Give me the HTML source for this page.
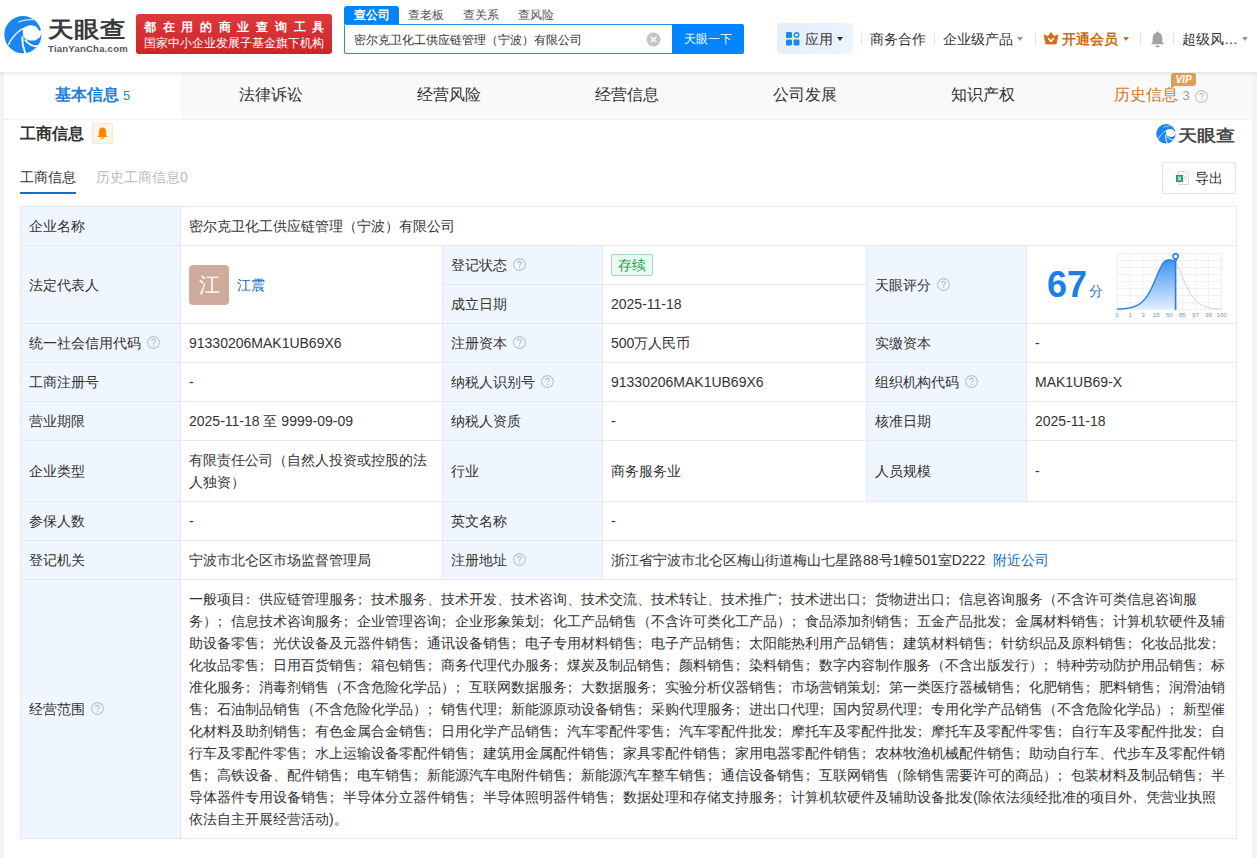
<!DOCTYPE html>
<html><head><meta charset="utf-8">
<style>
*{box-sizing:border-box;margin:0;padding:0}
html,body{width:1257px;height:858px;overflow:hidden}
body{position:relative;background:#f3f3f3;font-family:"Liberation Sans",sans-serif;color:#333;font-size:14px}
.abs{position:absolute}
#hdr{position:absolute;left:0;top:0;width:1257px;height:72px;background:#fff}
.logo-t{position:absolute;left:48px;top:18px;font-size:26px;font-weight:bold;color:#3a3a3a;line-height:26px;transform:scaleY(.86);transform-origin:0 0}
.logo-s{position:absolute;left:48px;top:44px;font-size:9.5px;font-weight:bold;color:#555;letter-spacing:.25px;line-height:10px}
#badge{position:absolute;left:136px;top:14px;width:196px;height:40px;background:linear-gradient(#dd3a3c,#cc2629);border-radius:3px;color:#fff}
#badge .l1{position:absolute;left:8px;top:6px;font-size:12px;line-height:14px;font-weight:bold;letter-spacing:6.7px;white-space:nowrap}
#badge .l2{position:absolute;left:8px;top:22px;font-size:12px;line-height:14px;white-space:nowrap}
.stab{position:absolute;top:6px;height:18px;font-size:12px;line-height:18px;color:#555;white-space:nowrap}
.stab.on{background:#0084ff;color:#fff;border-radius:3px 3px 0 0;left:344px;width:55px;text-align:center;font-weight:bold}
#sinput{position:absolute;left:344px;top:24px;width:329px;height:30px;border:1px solid #2a8de0;border-right:none;border-radius:2px 0 0 2px;background:#fff}
#sinput span{position:absolute;left:9px;top:8px;font-size:12px;line-height:14px;color:#333;white-space:nowrap}
#sbtn{position:absolute;left:672px;top:24px;width:72px;height:30px;background:#0084ff;border-radius:0 2px 2px 0;color:#fff;font-size:12px;line-height:30px;text-align:center}
.nav{position:absolute;top:31px;font-size:14px;line-height:16px;color:#333;white-space:nowrap}
.sep{position:absolute;top:33px;width:1px;height:12px;background:#e3e3e3}
.caret{position:absolute;width:0;height:0;border-left:3.5px solid transparent;border-right:3.5px solid transparent;border-top:4px solid #999}
#tabs{position:absolute;left:4px;top:72px;width:1248px;height:48px;background:#f9f9f9;border-bottom:1px solid #f1f1f1}
.tab{position:absolute;top:0;width:178px;height:47px;text-align:center;font-size:16px;line-height:46px;color:#333}
.tab.on{background:#fff;color:#1e7fd8;font-weight:bold;width:177px;left:0}
#card{position:absolute;left:4px;top:120px;width:1248px;height:760px;background:#fff}
table{position:absolute;left:20px;top:206px;border-collapse:collapse;table-layout:fixed;width:1216px}
td{border:1px solid #e6e9ee;padding:8px 8px;font-size:14px;line-height:22px;color:#333;vertical-align:middle;white-space:nowrap}
td.k{background:#eff6fd}
.q{display:inline-block;position:relative;top:0px;width:13px;height:13px;vertical-align:-1px;margin-left:6px}
a{color:#0a6cc4;text-decoration:none}
.pp{font-style:normal;position:relative;left:-4px}
</style></head><body>
<div id="hdr">
  <svg class="abs" style="left:2px;top:14px" width="44" height="42" viewBox="0 0 44 42">
    <circle cx="20.9" cy="20.7" r="18.6" fill="#1a86f0"/>
    <path d="M21 14.7 C23 12.5 25 11.6 27.4 11.4 C30.5 11.2 33.5 12 35 13.5 C36.2 14.7 36.6 15.8 36.5 16.8 L41 16 L41 20.5 L39.6 19.6 C38.5 23.5 35.5 26.2 31.8 26.5 C28.5 26.8 26 26.3 24 25 C22 23.8 21.2 22.5 21 20.5 C20.8 18.5 20.8 16.5 21 14.7Z" fill="#fff"/>
    <path d="M6.2 31 C8.5 26 12 21.5 16 18 C18 16.2 20.5 14.8 22.8 14" fill="none" stroke="#fff" stroke-width="1.4"/>
    <path d="M16 8.4 C18.5 7 22 6.2 26 5.8 C27.6 5.7 29.5 5.6 31 5.7" fill="none" stroke="#fff" stroke-width="1"/>
    <path d="M20.4 22.5 C20.2 27 20.7 32 22.3 36 C22.7 37.2 23 38.2 23.5 39.5" fill="none" stroke="#fff" stroke-width="1.9"/>
    <path d="M22.8 25.5 C24.5 28 26.5 29.8 29 31 C31 32 33.5 32.4 36 32.3" fill="none" stroke="#fff" stroke-width="1.9"/>
    <path d="M31 4 C35 6 38 9 39.5 13 L44 13 L44 0Z" fill="#fff"/>
  </svg>
  <div class="logo-t">天眼查</div>
  <div class="logo-s">TianYanCha.com</div>
  <div id="badge"><div class="l1">都在用的商业查询工具</div><div class="l2">国家中小企业发展子基金旗下机构</div></div>
  <div class="stab on">查公司</div>
  <div class="stab" style="left:408px">查老板</div>
  <div class="stab" style="left:463px">查关系</div>
  <div class="stab" style="left:518px">查风险</div>
  <div id="sinput"><span>密尔克卫化工供应链管理（宁波）有限公司</span>
    <svg class="abs" style="left:301px;top:7px" width="15" height="15" viewBox="0 0 15 15"><circle cx="7.5" cy="7.5" r="7" fill="#c4c4c4"/><path d="M4.8 4.8L10.2 10.2M10.2 4.8L4.8 10.2" stroke="#fff" stroke-width="1.4"/></svg>
  </div>
  <div id="sbtn">天眼一下</div>
  <div class="abs" style="left:777px;top:23px;width:76px;height:31px;background:linear-gradient(135deg,#e3effc,#e9f2fd 70%,#eef5fd);border-radius:3px"></div>
  <svg class="abs" style="left:786px;top:32px" width="14" height="14" viewBox="0 0 14 14"><rect x="0" y="0" width="6" height="6" rx="1.2" fill="#1a86f0"/><rect x="0" y="7.5" width="6" height="6" rx="1.2" fill="#1a86f0"/><rect x="7.5" y="7.5" width="6" height="6" rx="1.2" fill="#1a86f0"/><circle cx="10.5" cy="3" r="2.3" fill="none" stroke="#1a86f0" stroke-width="1.4"/></svg>
  <div class="nav" style="left:805px">应用</div>
  <div class="caret" style="left:837px;top:37px;border-top-color:#333"></div>
  <div class="sep" style="left:861px"></div>
  <div class="nav" style="left:870px">商务合作</div>
  <div class="sep" style="left:934px"></div>
  <div class="nav" style="left:943px">企业级产品</div>
  <div class="caret" style="left:1017px;top:37px"></div>
  <div class="sep" style="left:1035px"></div>
  <svg class="abs" style="left:1043px;top:32px" width="16" height="13" viewBox="0 0 16 13"><path d="M1 2.8 L5 4.6 L8 0.4 L11 4.6 L15 2.8 L13.2 12 L2.8 12Z" fill="#cf6f1c" stroke="#cf6f1c" stroke-width=".8" stroke-linejoin="round"/><path d="M5.2 6.2 L8 9.4 L10.8 6.2" fill="none" stroke="#fff" stroke-width="1.6"/></svg>
  <div class="nav" style="left:1062px;color:#c8701e;font-weight:bold">开通会员</div>
  <div class="caret" style="left:1123px;top:37px;border-top-color:#c8701e"></div>
  <div class="sep" style="left:1140px"></div>
  <svg class="abs" style="left:1150px;top:31px" width="15" height="17" viewBox="0 0 15 17"><path d="M7.5 0.5 C8.3 0.5 8.6 1 8.6 1.6 C11 2.3 12.3 4.5 12.3 7.5 L12.3 11 L14 13.3 L1 13.3 L2.7 11 L2.7 7.5 C2.7 4.5 4 2.3 6.4 1.6 C6.4 1 6.7 0.5 7.5 0.5Z" fill="#a0a4a8"/><rect x="5.5" y="14.6" width="4" height="1.6" rx=".8" fill="#a0a4a8"/></svg>
  <div class="sep" style="left:1173px"></div>
  <div class="nav" style="left:1182px">超级风…</div>
  <div class="caret" style="left:1242px;top:37px"></div>
</div>
<div id="tabs">
  <div class="tab on">基本信息 <span style="font-size:13px;font-weight:normal">5</span></div>
  <div class="tab" style="left:178px">法律诉讼</div>
  <div class="tab" style="left:356px">经营风险</div>
  <div class="tab" style="left:534px">经营信息</div>
  <div class="tab" style="left:712px">公司发展</div>
  <div class="tab" style="left:890px">知识产权</div>
  <div class="tab" style="left:1068px;color:#c97a2e">历史信息 <span style="font-size:13px;color:#999">3</span><svg class="q" style="width:13px;height:13px;top:2px;margin-left:5px" viewBox="0 0 13 13"><circle cx="6.5" cy="6.5" r="5.9" fill="none" stroke="#c4c4c4" stroke-width="1.1"/><path d="M4.7 5.1 C4.7 3.9 5.5 3.3 6.5 3.3 C7.6 3.3 8.3 4 8.3 4.9 C8.3 6.2 6.6 6.2 6.6 7.8" fill="none" stroke="#bbb" stroke-width="1.05"/><circle cx="6.6" cy="9.5" r=".65" fill="#bbb"/></svg></div>
  <div class="abs" style="left:1167px;top:1px;width:25px;height:13px;background:#e0a050;border-radius:3px 3px 3px 0;color:#fff;font-size:10px;line-height:13px;font-weight:bold;font-style:italic;text-align:center">VIP</div>
  <div class="abs" style="left:1167px;top:14px;width:0;height:0;border-top:3px solid #e0a050;border-right:4px solid transparent"></div>
</div>
<div id="card"></div>
<div class="abs" style="left:0;top:72px;width:1257px;height:5px;background:linear-gradient(rgba(0,0,0,.085),rgba(0,0,0,.035) 40%,rgba(0,0,0,0))"></div>
<div class="abs" style="left:20px;top:124px;font-size:16px;line-height:20px;font-weight:bold;color:#333">工商信息</div>
<div class="abs" style="left:92px;top:123px;width:21px;height:21px;background:#fdf4ea;border:1px solid #f6e6d4;border-radius:2px"></div>
<svg class="abs" style="left:97px;top:127px" width="11" height="12" viewBox="0 0 11 12"><path d="M5.5 0.5 C8 0.5 9 2.5 9 5 L9 8 L10.5 10 L0.5 10 L2 8 L2 5 C2 2.5 3 0.5 5.5 0.5Z" fill="#ff8200"/><rect x="4" y="10.5" width="3" height="1.3" rx=".6" fill="#ff8200"/></svg>
<div class="abs" style="left:20px;top:169px;font-size:14px;line-height:16px;color:#333">工商信息</div>
<div class="abs" style="left:20px;top:192px;width:56px;height:2px;background:#0a6ed1"></div>
<div class="abs" style="left:96px;top:169px;font-size:14px;line-height:16px;color:#bbb">历史工商信息0</div>
<svg class="abs" style="left:1154.7px;top:123.4px" width="23.05" height="22" viewBox="0 0 44 42">
    <circle cx="20.9" cy="20.7" r="18.6" fill="#1a86f0"/>
    <path d="M21 14.7 C23 12.5 25 11.6 27.4 11.4 C30.5 11.2 33.5 12 35 13.5 C36.2 14.7 36.6 15.8 36.5 16.8 L41 16 L41 20.5 L39.6 19.6 C38.5 23.5 35.5 26.2 31.8 26.5 C28.5 26.8 26 26.3 24 25 C22 23.8 21.2 22.5 21 20.5 C20.8 18.5 20.8 16.5 21 14.7Z" fill="#fff"/>
    <path d="M6.2 31 C8.5 26 12 21.5 16 18 C18 16.2 20.5 14.8 22.8 14" fill="none" stroke="#fff" stroke-width="1.4"/>
    <path d="M16 8.4 C18.5 7 22 6.2 26 5.8 C27.6 5.7 29.5 5.6 31 5.7" fill="none" stroke="#fff" stroke-width="1"/>
    <path d="M20.4 22.5 C20.2 27 20.7 32 22.3 36 C22.7 37.2 23 38.2 23.5 39.5" fill="none" stroke="#fff" stroke-width="1.9"/>
    <path d="M22.8 25.5 C24.5 28 26.5 29.8 29 31 C31 32 33.5 32.4 36 32.3" fill="none" stroke="#fff" stroke-width="1.9"/>
    <path d="M31 4 C35 6 38 9 39.5 13 L44 13 L44 0Z" fill="#fff"/>
  </svg>
<div class="abs" style="left:1178px;top:127.5px;font-size:19px;line-height:19px;font-weight:bold;color:#484848;transform:scaleY(.84);transform-origin:0 0">天眼查</div>
<div class="abs" style="left:1162px;top:162px;width:74px;height:32px;border:1px solid #e2e2e2;border-radius:2px"></div>
<svg class="abs" style="left:1176px;top:171px" width="13" height="14" viewBox="0 0 13 14"><path d="M2.5 0.5 L9.5 0.5 L12.5 3.5 L12.5 13.5 L2.5 13.5Z" fill="#fff" stroke="#ccc" stroke-width=".8"/><rect x="0" y="4" width="7" height="7" fill="#1f9f5f"/><path d="M1.8 5.5L5.2 9.5M5.2 5.5L1.8 9.5" stroke="#fff" stroke-width="1.1"/><path d="M8 5.5h3M8 7.5h3M8 9.5h3" stroke="#ccc" stroke-width=".7"/></svg>
<div class="abs" style="left:1195px;top:170px;font-size:14px;line-height:16px;color:#333">导出</div>
<table>
<colgroup><col style="width:160px"><col style="width:262px"><col style="width:160px"><col style="width:264px"><col style="width:160px"><col style="width:210px"></colgroup>
<tr><td class="k">企业名称</td><td colspan="5">密尔克卫化工供应链管理（宁波）有限公司</td></tr>
<tr><td class="k" rowspan="2">法定代表人</td><td rowspan="2"><div style="position:relative;height:60px"><div class="abs" style="left:0;top:10px;width:40px;height:40px;background:#cfab9c;border-radius:4px;color:#fff;font-size:21px;line-height:40px;text-align:center">江</div><a class="abs" style="left:48px;top:19px" href="#">江震</a></div></td><td class="k">登记状态<svg class="q" width="13" height="13" viewBox="0 0 13 13"><circle cx="6.5" cy="6.5" r="5.9" fill="none" stroke="#b3c3d5" stroke-width="1.1"/><path d="M4.7 5.1 C4.7 3.9 5.5 3.3 6.5 3.3 C7.6 3.3 8.3 4 8.3 4.9 C8.3 6.2 6.6 6.2 6.6 7.8" fill="none" stroke="#a9bbcf" stroke-width="1.1"/><circle cx="6.6" cy="9.5" r=".7" fill="#a9bbcf"/></svg></td><td><span style="display:inline-block;height:22px;padding:0 6px;border:1px solid #a8d8b8;background:#e9faf0;color:#1f9a4c;border-radius:2px;line-height:20px;vertical-align:top">存续</span></td><td class="k" rowspan="2">天眼评分<svg class="q" width="13" height="13" viewBox="0 0 13 13"><circle cx="6.5" cy="6.5" r="5.9" fill="none" stroke="#b3c3d5" stroke-width="1.1"/><path d="M4.7 5.1 C4.7 3.9 5.5 3.3 6.5 3.3 C7.6 3.3 8.3 4 8.3 4.9 C8.3 6.2 6.6 6.2 6.6 7.8" fill="none" stroke="#a9bbcf" stroke-width="1.1"/><circle cx="6.6" cy="9.5" r=".7" fill="#a9bbcf"/></svg></td><td rowspan="2" style="position:relative"><div style="position:relative;height:60px"><div class="abs" style="left:12px;top:12px;font-size:36px;line-height:36px;font-weight:bold;color:#1a7fe8">67</div><div class="abs" style="left:54px;top:28px;font-size:14px;line-height:16px;color:#2a72c0">分</div>
</div></td></tr>
<tr><td class="k">成立日期</td><td>2025-11-18</td></tr>
<tr><td class="k">统一社会信用代码<svg class="q" width="13" height="13" viewBox="0 0 13 13"><circle cx="6.5" cy="6.5" r="5.9" fill="none" stroke="#b3c3d5" stroke-width="1.1"/><path d="M4.7 5.1 C4.7 3.9 5.5 3.3 6.5 3.3 C7.6 3.3 8.3 4 8.3 4.9 C8.3 6.2 6.6 6.2 6.6 7.8" fill="none" stroke="#a9bbcf" stroke-width="1.1"/><circle cx="6.6" cy="9.5" r=".7" fill="#a9bbcf"/></svg></td><td>91330206MAK1UB69X6</td><td class="k">注册资本<svg class="q" width="13" height="13" viewBox="0 0 13 13"><circle cx="6.5" cy="6.5" r="5.9" fill="none" stroke="#b3c3d5" stroke-width="1.1"/><path d="M4.7 5.1 C4.7 3.9 5.5 3.3 6.5 3.3 C7.6 3.3 8.3 4 8.3 4.9 C8.3 6.2 6.6 6.2 6.6 7.8" fill="none" stroke="#a9bbcf" stroke-width="1.1"/><circle cx="6.6" cy="9.5" r=".7" fill="#a9bbcf"/></svg></td><td>500万人民币</td><td class="k">实缴资本</td><td>-</td></tr>
<tr><td class="k">工商注册号</td><td>-</td><td class="k">纳税人识别号<svg class="q" width="13" height="13" viewBox="0 0 13 13"><circle cx="6.5" cy="6.5" r="5.9" fill="none" stroke="#b3c3d5" stroke-width="1.1"/><path d="M4.7 5.1 C4.7 3.9 5.5 3.3 6.5 3.3 C7.6 3.3 8.3 4 8.3 4.9 C8.3 6.2 6.6 6.2 6.6 7.8" fill="none" stroke="#a9bbcf" stroke-width="1.1"/><circle cx="6.6" cy="9.5" r=".7" fill="#a9bbcf"/></svg></td><td>91330206MAK1UB69X6</td><td class="k">组织机构代码<svg class="q" width="13" height="13" viewBox="0 0 13 13"><circle cx="6.5" cy="6.5" r="5.9" fill="none" stroke="#b3c3d5" stroke-width="1.1"/><path d="M4.7 5.1 C4.7 3.9 5.5 3.3 6.5 3.3 C7.6 3.3 8.3 4 8.3 4.9 C8.3 6.2 6.6 6.2 6.6 7.8" fill="none" stroke="#a9bbcf" stroke-width="1.1"/><circle cx="6.6" cy="9.5" r=".7" fill="#a9bbcf"/></svg></td><td>MAK1UB69-X</td></tr>
<tr><td class="k">营业期限</td><td>2025-11-18 至 9999-09-09</td><td class="k">纳税人资质</td><td>-</td><td class="k">核准日期</td><td>2025-11-18</td></tr>
<tr><td class="k">企业类型</td><td>有限责任公司（自然人投资或控股的法<br>人独资）</td><td class="k">行业</td><td>商务服务业</td><td class="k">人员规模</td><td>-</td></tr>
<tr><td class="k">参保人数</td><td>-</td><td class="k">英文名称</td><td colspan="3">-</td></tr>
<tr><td class="k">登记机关</td><td>宁波市北仑区市场监督管理局</td><td class="k">注册地址<svg class="q" width="13" height="13" viewBox="0 0 13 13"><circle cx="6.5" cy="6.5" r="5.9" fill="none" stroke="#b3c3d5" stroke-width="1.1"/><path d="M4.7 5.1 C4.7 3.9 5.5 3.3 6.5 3.3 C7.6 3.3 8.3 4 8.3 4.9 C8.3 6.2 6.6 6.2 6.6 7.8" fill="none" stroke="#a9bbcf" stroke-width="1.1"/><circle cx="6.6" cy="9.5" r=".7" fill="#a9bbcf"/></svg></td><td colspan="3">浙江省宁波市北仑区梅山街道梅山七星路88号1幢501室D222 <a href="#" style="margin-left:4px">附近公司</a></td></tr>
<tr><td class="k">经营范围<svg class="q" width="13" height="13" viewBox="0 0 13 13"><circle cx="6.5" cy="6.5" r="5.9" fill="none" stroke="#b3c3d5" stroke-width="1.1"/><path d="M4.7 5.1 C4.7 3.9 5.5 3.3 6.5 3.3 C7.6 3.3 8.3 4 8.3 4.9 C8.3 6.2 6.6 6.2 6.6 7.8" fill="none" stroke="#a9bbcf" stroke-width="1.1"/><circle cx="6.6" cy="9.5" r=".7" fill="#a9bbcf"/></svg></td><td colspan="5">一般项目<i class="pp">：</i>供应链管理服务<i class="pp">；</i>技术服务、技术开发、技术咨询、技术交流、技术转让、技术推广<i class="pp">；</i>技术进出口<i class="pp">；</i>货物进出口<i class="pp">；</i>信息咨询服务（不含许可类信息咨询服<br>务）<i class="pp">；</i>信息技术咨询服务<i class="pp">；</i>企业管理咨询<i class="pp">；</i>企业形象策划<i class="pp">；</i>化工产品销售（不含许可类化工产品）<i class="pp">；</i>食品添加剂销售<i class="pp">；</i>五金产品批发<i class="pp">；</i>金属材料销售<i class="pp">；</i>计算机软硬件及辅<br>助设备零售<i class="pp">；</i>光伏设备及元器件销售<i class="pp">；</i>通讯设备销售<i class="pp">；</i>电子专用材料销售<i class="pp">；</i>电子产品销售<i class="pp">；</i>太阳能热利用产品销售<i class="pp">；</i>建筑材料销售<i class="pp">；</i>针纺织品及原料销售<i class="pp">；</i>化妆品批发<i class="pp">；</i><br>化妆品零售<i class="pp">；</i>日用百货销售<i class="pp">；</i>箱包销售<i class="pp">；</i>商务代理代办服务<i class="pp">；</i>煤炭及制品销售<i class="pp">；</i>颜料销售<i class="pp">；</i>染料销售<i class="pp">；</i>数字内容制作服务（不含出版发行）<i class="pp">；</i>特种劳动防护用品销售<i class="pp">；</i>标<br>准化服务<i class="pp">；</i>消毒剂销售（不含危险化学品）<i class="pp">；</i>互联网数据服务<i class="pp">；</i>大数据服务<i class="pp">；</i>实验分析仪器销售<i class="pp">；</i>市场营销策划<i class="pp">；</i>第一类医疗器械销售<i class="pp">；</i>化肥销售<i class="pp">；</i>肥料销售<i class="pp">；</i>润滑油销<br>售<i class="pp">；</i>石油制品销售（不含危险化学品）<i class="pp">；</i>销售代理<i class="pp">；</i>新能源原动设备销售<i class="pp">；</i>采购代理服务<i class="pp">；</i>进出口代理<i class="pp">；</i>国内贸易代理<i class="pp">；</i>专用化学产品销售（不含危险化学品）<i class="pp">；</i>新型催<br>化材料及助剂销售<i class="pp">；</i>有色金属合金销售<i class="pp">；</i>日用化学产品销售<i class="pp">；</i>汽车零配件零售<i class="pp">；</i>汽车零配件批发<i class="pp">；</i>摩托车及零配件批发<i class="pp">；</i>摩托车及零配件零售<i class="pp">；</i>自行车及零配件批发<i class="pp">；</i>自<br>行车及零配件零售<i class="pp">；</i>水上运输设备零配件销售<i class="pp">；</i>建筑用金属配件销售<i class="pp">；</i>家具零配件销售<i class="pp">；</i>家用电器零配件销售<i class="pp">；</i>农林牧渔机械配件销售<i class="pp">；</i>助动自行车、代步车及零配件销<br>售<i class="pp">；</i>高铁设备、配件销售<i class="pp">；</i>电车销售<i class="pp">；</i>新能源汽车电附件销售<i class="pp">；</i>新能源汽车整车销售<i class="pp">；</i>通信设备销售<i class="pp">；</i>互联网销售（除销售需要许可的商品）<i class="pp">；</i>包装材料及制品销售<i class="pp">；</i>半<br>导体器件专用设备销售<i class="pp">；</i>半导体分立器件销售<i class="pp">；</i>半导体照明器件销售<i class="pp">；</i>数据处理和存储支持服务<i class="pp">；</i>计算机软硬件及辅助设备批发(除依法须经批准的项目外<i class="pp">，</i>凭营业执照<br>依法自主开展经营活动)。</td></tr>
</table>
<svg class="abs" style="left:0;top:0" width="1257" height="858" viewBox="0 0 1257 858" style="pointer-events:none">
<defs><linearGradient id="gf" x1="0" y1="0" x2="0" y2="1"><stop offset="0" stop-color="#3d94f2"/><stop offset="1" stop-color="#e3effc"/></linearGradient></defs>
<g stroke="#f0f0f0" stroke-width="1"><line x1="1117.00" y1="253.5" x2="1117.00" y2="309.7"/><line x1="1130.08" y1="253.5" x2="1130.08" y2="309.7"/><line x1="1143.15" y1="253.5" x2="1143.15" y2="309.7"/><line x1="1156.22" y1="253.5" x2="1156.22" y2="309.7"/><line x1="1169.30" y1="253.5" x2="1169.30" y2="309.7"/><line x1="1182.38" y1="253.5" x2="1182.38" y2="309.7"/><line x1="1195.45" y1="253.5" x2="1195.45" y2="309.7"/><line x1="1208.52" y1="253.5" x2="1208.52" y2="309.7"/><line x1="1221.60" y1="253.5" x2="1221.60" y2="309.7"/><line x1="1117.0" y1="253.50" x2="1221.6" y2="253.50"/><line x1="1117.0" y1="260.52" x2="1221.6" y2="260.52"/><line x1="1117.0" y1="267.55" x2="1221.6" y2="267.55"/><line x1="1117.0" y1="274.57" x2="1221.6" y2="274.57"/><line x1="1117.0" y1="281.60" x2="1221.6" y2="281.60"/><line x1="1117.0" y1="288.62" x2="1221.6" y2="288.62"/><line x1="1117.0" y1="295.65" x2="1221.6" y2="295.65"/><line x1="1117.0" y1="302.68" x2="1221.6" y2="302.68"/><line x1="1117.0" y1="309.70" x2="1221.6" y2="309.70"/></g>
<path d="M1117.0,309.17 L1117.5,309.15 L1118.0,309.13 L1118.5,309.10 L1119.0,309.08 L1119.5,309.05 L1120.0,309.02 L1120.5,308.99 L1121.0,308.95 L1121.5,308.92 L1122.0,308.88 L1122.5,308.84 L1123.0,308.79 L1123.5,308.74 L1124.0,308.69 L1124.5,308.64 L1125.0,308.59 L1125.5,308.52 L1126.0,308.46 L1126.5,308.39 L1127.0,308.32 L1127.5,308.24 L1128.0,308.16 L1128.5,308.07 L1129.0,307.98 L1129.5,307.88 L1130.0,307.77 L1130.5,307.66 L1131.0,307.54 L1131.5,307.41 L1132.0,307.28 L1132.5,307.13 L1133.0,306.98 L1133.5,306.82 L1134.0,306.65 L1134.5,306.46 L1135.0,306.27 L1135.5,306.06 L1136.0,305.84 L1136.5,305.61 L1137.0,305.36 L1137.5,305.10 L1138.0,304.82 L1138.5,304.53 L1139.0,304.21 L1139.5,303.88 L1140.0,303.53 L1140.5,303.16 L1141.0,302.77 L1141.5,302.36 L1142.0,301.93 L1142.5,301.47 L1143.0,300.98 L1143.5,300.47 L1144.0,299.94 L1144.5,299.37 L1145.0,298.78 L1145.5,298.16 L1146.0,297.50 L1146.5,296.82 L1147.0,296.10 L1147.5,295.36 L1148.0,294.58 L1148.5,293.76 L1149.0,292.92 L1149.5,292.04 L1150.0,291.12 L1150.5,290.18 L1151.0,289.20 L1151.5,288.19 L1152.0,287.16 L1152.5,286.09 L1153.0,285.00 L1153.5,283.88 L1154.0,282.74 L1154.5,281.58 L1155.0,280.41 L1155.5,279.22 L1156.0,278.03 L1156.5,276.83 L1157.0,275.64 L1157.5,274.45 L1158.0,273.27 L1158.5,272.11 L1159.0,270.97 L1159.5,269.86 L1160.0,268.78 L1160.5,267.75 L1161.0,266.76 L1161.5,265.83 L1162.0,264.95 L1162.5,264.14 L1163.0,263.40 L1163.5,262.73 L1164.0,262.13 L1164.5,261.62 L1165.0,261.18 L1165.5,260.82 L1166.0,260.53 L1166.5,260.32 L1167.0,260.17 L1167.5,260.08 L1168.0,260.03 L1168.5,260.01 L1169.0,260.00 L1169.5,260.00 L1170.0,260.00 L1170.5,260.01 L1171.0,260.03 L1171.5,260.08 L1172.0,260.17 L1172.5,260.32 L1173.0,260.53 L1173.5,260.82 L1174.0,261.18 L1174.5,261.62 L1175.0,262.13 L1175.5,262.73 L1175.6,262.86 L1175.6,309.7 L1117,309.7Z" fill="url(#gf)"/>
<path d="M1175.6,262.86 L1176.0,263.40 L1176.5,264.14 L1177.0,264.95 L1177.5,265.83 L1178.0,266.76 L1178.5,267.75 L1179.0,268.78 L1179.5,269.86 L1180.0,270.97 L1180.5,272.11 L1181.0,273.27 L1181.5,274.45 L1182.0,275.64 L1182.5,276.83 L1183.0,278.03 L1183.5,279.22 L1184.0,280.41 L1184.5,281.58 L1185.0,282.74 L1185.5,283.88 L1186.0,285.00 L1186.5,286.09 L1187.0,287.16 L1187.5,288.19 L1188.0,289.20 L1188.5,290.18 L1189.0,291.12 L1189.5,292.04 L1190.0,292.92 L1190.5,293.76 L1191.0,294.58 L1191.5,295.36 L1192.0,296.10 L1192.5,296.82 L1193.0,297.50 L1193.5,298.16 L1194.0,298.78 L1194.5,299.37 L1195.0,299.94 L1195.5,300.47 L1196.0,300.98 L1196.5,301.47 L1197.0,301.93 L1197.5,302.36 L1198.0,302.77 L1198.5,303.16 L1199.0,303.53 L1199.5,303.88 L1200.0,304.21 L1200.5,304.53 L1201.0,304.82 L1201.5,305.10 L1202.0,305.36 L1202.5,305.61 L1203.0,305.84 L1203.5,306.06 L1204.0,306.27 L1204.5,306.46 L1205.0,306.65 L1205.5,306.82 L1206.0,306.98 L1206.5,307.13 L1207.0,307.28 L1207.5,307.41 L1208.0,307.54 L1208.5,307.66 L1209.0,307.77 L1209.5,307.88 L1210.0,307.98 L1210.5,308.07 L1211.0,308.16 L1211.5,308.24 L1212.0,308.32 L1212.5,308.39 L1213.0,308.46 L1213.5,308.52 L1214.0,308.59 L1214.5,308.64 L1215.0,308.69 L1215.5,308.74 L1216.0,308.79 L1216.5,308.84 L1217.0,308.88 L1217.5,308.92 L1218.0,308.95 L1218.5,308.99 L1219.0,309.02 L1219.5,309.05 L1220.0,309.08 L1220.5,309.10 L1221.0,309.13 L1221.5,309.15 L1221.6,309.15" fill="none" stroke="#c9ccd0" stroke-width="1"/>
<path d="M1117.0,309.17 L1117.5,309.15 L1118.0,309.13 L1118.5,309.10 L1119.0,309.08 L1119.5,309.05 L1120.0,309.02 L1120.5,308.99 L1121.0,308.95 L1121.5,308.92 L1122.0,308.88 L1122.5,308.84 L1123.0,308.79 L1123.5,308.74 L1124.0,308.69 L1124.5,308.64 L1125.0,308.59 L1125.5,308.52 L1126.0,308.46 L1126.5,308.39 L1127.0,308.32 L1127.5,308.24 L1128.0,308.16 L1128.5,308.07 L1129.0,307.98 L1129.5,307.88 L1130.0,307.77 L1130.5,307.66 L1131.0,307.54 L1131.5,307.41 L1132.0,307.28 L1132.5,307.13 L1133.0,306.98 L1133.5,306.82 L1134.0,306.65 L1134.5,306.46 L1135.0,306.27 L1135.5,306.06 L1136.0,305.84 L1136.5,305.61 L1137.0,305.36 L1137.5,305.10 L1138.0,304.82 L1138.5,304.53 L1139.0,304.21 L1139.5,303.88 L1140.0,303.53 L1140.5,303.16 L1141.0,302.77 L1141.5,302.36 L1142.0,301.93 L1142.5,301.47 L1143.0,300.98 L1143.5,300.47 L1144.0,299.94 L1144.5,299.37 L1145.0,298.78 L1145.5,298.16 L1146.0,297.50 L1146.5,296.82 L1147.0,296.10 L1147.5,295.36 L1148.0,294.58 L1148.5,293.76 L1149.0,292.92 L1149.5,292.04 L1150.0,291.12 L1150.5,290.18 L1151.0,289.20 L1151.5,288.19 L1152.0,287.16 L1152.5,286.09 L1153.0,285.00 L1153.5,283.88 L1154.0,282.74 L1154.5,281.58 L1155.0,280.41 L1155.5,279.22 L1156.0,278.03 L1156.5,276.83 L1157.0,275.64 L1157.5,274.45 L1158.0,273.27 L1158.5,272.11 L1159.0,270.97 L1159.5,269.86 L1160.0,268.78 L1160.5,267.75 L1161.0,266.76 L1161.5,265.83 L1162.0,264.95 L1162.5,264.14 L1163.0,263.40 L1163.5,262.73 L1164.0,262.13 L1164.5,261.62 L1165.0,261.18 L1165.5,260.82 L1166.0,260.53 L1166.5,260.32 L1167.0,260.17 L1167.5,260.08 L1168.0,260.03 L1168.5,260.01 L1169.0,260.00 L1169.5,260.00 L1170.0,260.00 L1170.5,260.01 L1171.0,260.03 L1171.5,260.08 L1172.0,260.17 L1172.5,260.32 L1173.0,260.53 L1173.5,260.82 L1174.0,261.18 L1174.5,261.62 L1175.0,262.13 L1175.5,262.73 L1175.6,262.86" fill="none" stroke="#2b7dd6" stroke-width="1.4"/>
<line x1="1175.6" y1="258" x2="1175.6" y2="310" stroke="#2b7dd6" stroke-width="1.6"/>
<path d="M1175.6,262.5 L1172.9,258.3 A3.4,3.4 0 1 1 1178.3,258.3Z" fill="#2b86e6"/>
<circle cx="1175.6" cy="256.4" r="1.7" fill="#fff"/>
<g font-family="Liberation Sans" font-size="6" fill="#6f93bd" text-anchor="middle"><text x="1117.00" y="317">0</text><text x="1130.08" y="317">1</text><text x="1143.15" y="317">3</text><text x="1156.22" y="317">15</text><text x="1169.30" y="317">50</text><text x="1182.38" y="317">85</text><text x="1195.45" y="317">97</text><text x="1208.52" y="317">99</text><text x="1221.60" y="317">100</text></g>
</svg>
</body></html>
